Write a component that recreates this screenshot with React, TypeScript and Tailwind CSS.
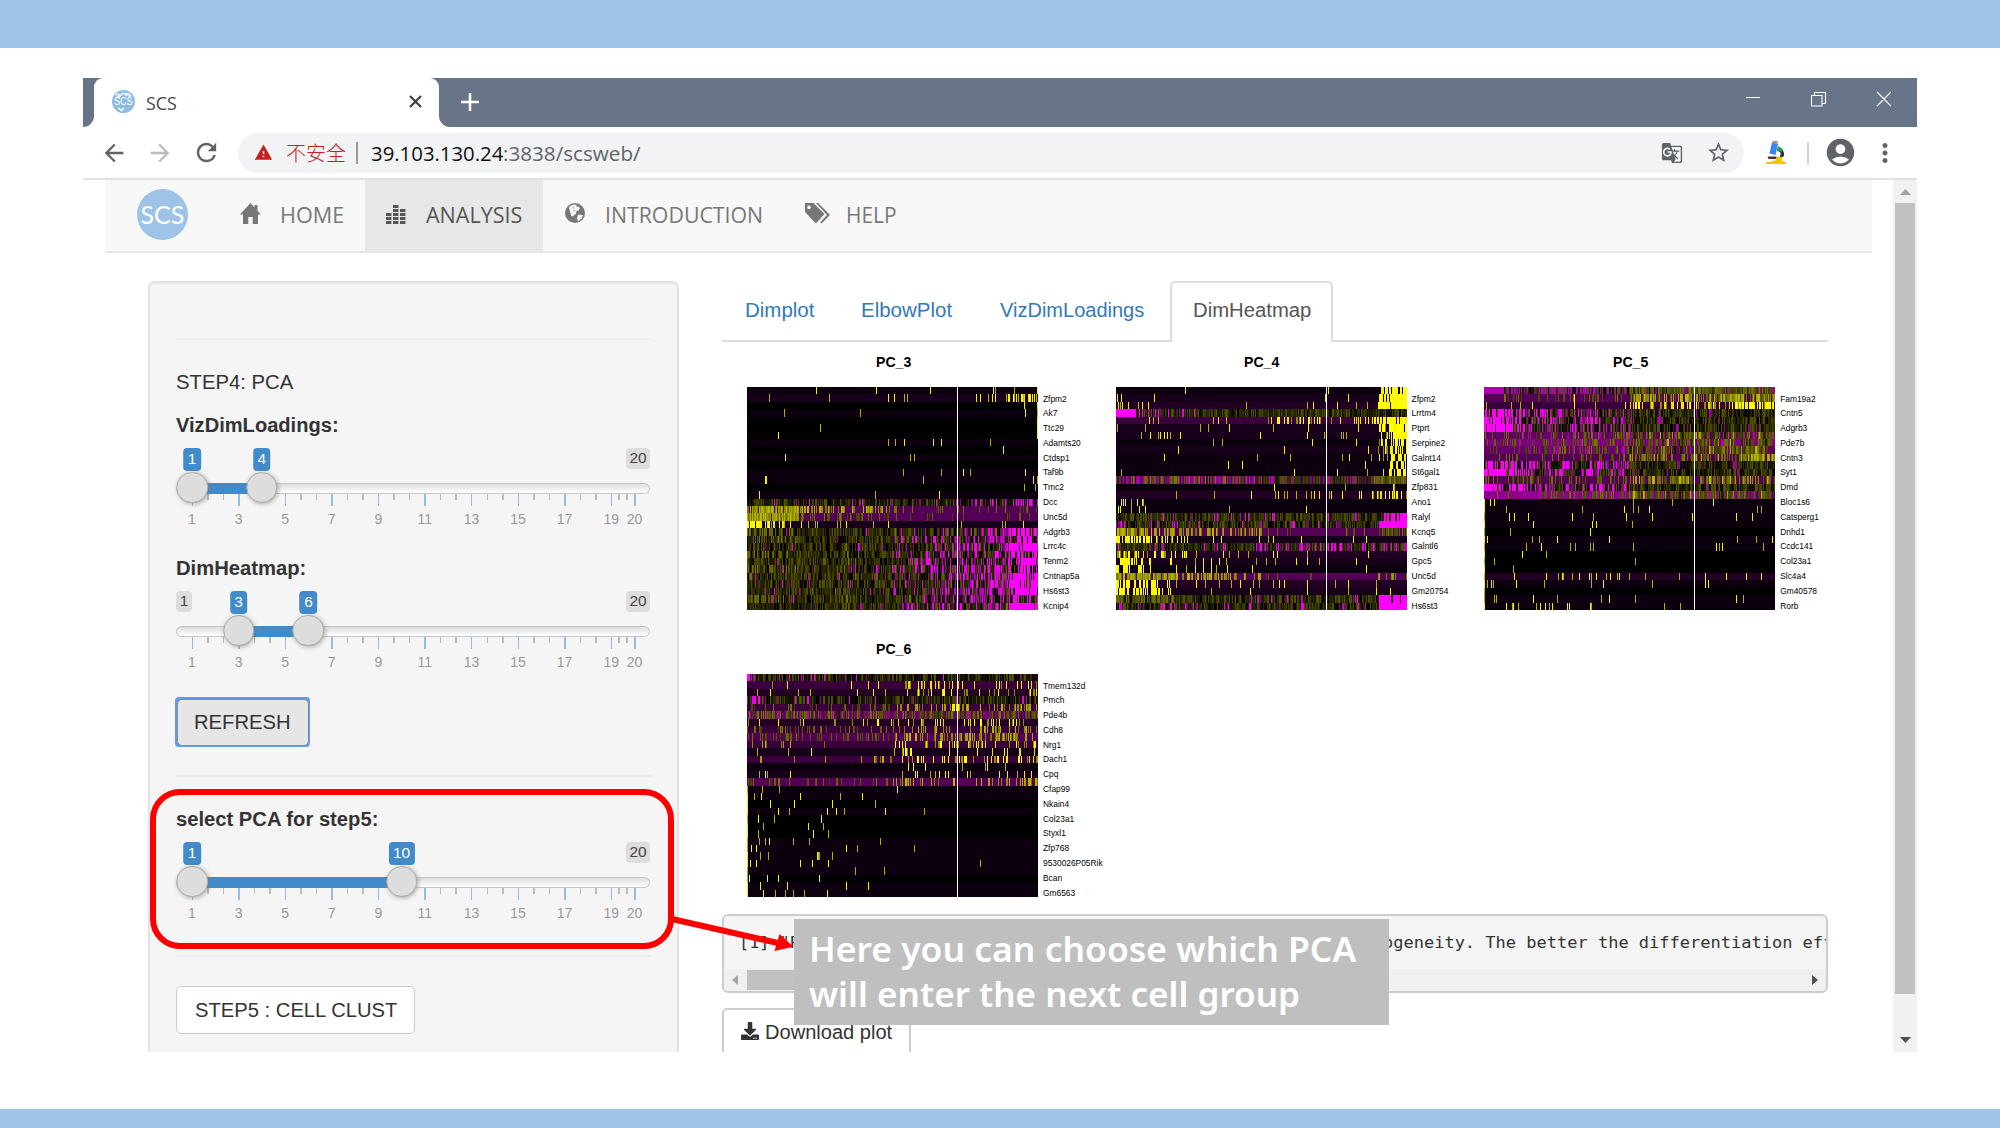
import { useLayoutEffect, useMemo, useRef, useState, type ReactNode } from "react";
import {
  MdArrowBack,
  MdArrowForward,
  MdRefresh,
  MdWarning,
  MdGTranslate,
  MdStarBorder,
  MdAccountCircle,
  MdMoreVert,
} from "react-icons/md";
import { FaDownload } from "react-icons/fa";

/** One line of text stretched horizontally to an exact width. */
function Fit({ w, className = "", children }: { w: number; className?: string; children: ReactNode }) {
  const ref = useRef<HTMLSpanElement>(null);
  const [k, setK] = useState(1);
  useLayoutEffect(() => {
    if (ref.current && ref.current.offsetWidth) setK(w / ref.current.offsetWidth);
  }, [w]);
  return (
    <span className={"block shrink-0 whitespace-pre " + className} style={{ width: w }}>
      <span ref={ref} className="inline-block origin-left" style={{ transform: k === 1 ? undefined : `scaleX(${k})` }}>
        {children}
      </span>
    </span>
  );
}

/* ---------- heat maps ---------- */

const PALETTES: Record<string, string[]> = {
  y: ["#ffff00", "#e6e600", "#8f8f00"],
  Y: ["#ffff00", "#ffff00", "#f4f400"],
  o: ["#2a2a00", "#383800", "#464600", "#1a1a00", "#525200"],
  O: ["#626200", "#545400", "#747400", "#444400"],
  g: ["#8c8c00", "#a4a400", "#747400", "#b8b800"],
  m: ["#ff00ff", "#f000f0", "#c000c0", "#7a0a7a"],
  M: ["#ff00ff"],
  q: ["#b400b4", "#a000a0", "#8a008a"],
  k: ["#000000", "#0e0e00", "#140014"],
};

type Zone = [number, number, number, number, string];
type Row = { b: string; t?: number[]; z?: Zone[] };

const K = "#000000";
const D = "#0c000e";
const N = "#16001a";
const P1 = "#220024";
const P2 = "#3a003c";
const P3 = "#540056";
const OL = "#262600";

const COLS = 291;

function buildCells(rows: Row[], seed: number) {
  let s = seed;
  const rnd = () => {
    s = (s * 1664525 + 1013904223) % 4294967296;
    return s / 4294967296;
  };
  const paths: Record<string, string> = {};
  const put = (color: string, x: number, y: number, w: number) => {
    paths[color] = (paths[color] ?? "") + `M${x} ${y}h${w}v1h${-w}z`;
  };
  rows.forEach((row, y) => {
    const cells: string[] = new Array(COLS).fill(row.b);
    (row.z ?? []).forEach(([x0, x1, p0, p1, pal]) => {
      const colors = PALETTES[pal];
      const a = Math.round(x0 * COLS);
      const b = Math.round(x1 * COLS);
      for (let i = a; i < b; i++) {
        const p = p0 + ((p1 - p0) * (i - a)) / (b - a);
        if (rnd() < p) {
          const c = colors[Math.floor(rnd() * colors.length)];
          cells[i] = c;
          if (rnd() < 0.15 && i + 1 < b) cells[i + 1] = c;
        }
      }
    });
    (row.t ?? []).forEach((t) => {
      const i = Math.min(COLS - 1, Math.round(t / 3));
      cells[i] = rnd() < 0.5 ? "#f4f400" : "#b4b400";
    });
    let start = 0;
    for (let i = 1; i <= COLS; i++) {
      if (i === COLS || cells[i] !== cells[start]) {
        put(cells[start], start, y, i - start);
        start = i;
      }
    }
  });
  return paths;
}

const pc3Dense = (a: number): Row => ({
  b: OL,
  z: [
    [0, 0.18, 0.7, 0.5, a ? "o" : "O"],
    [0.15, 1, 0.75, 0.6, "o"],
    [0, 1, 0.15, 0.35, "k"],
    [0.02, 0.5, 0.015, 0.03, "m"],
    [0.5, 0.72, 0.12, 0.3, "m"],
    [0.72, 0.9, 0.3, 0.5, "m"],
    [0.9, 1, a ? 0.75 : 0.5, a ? 0.85 : 0.6, "M"],
    [0, 0.9, 0.03, 0.05, "O"],
  ],
});

const PC3: Row[] = [
  { b: D, t: [208, 388, 550, 737, 745, 800, 872] },
  { b: N, t: [67, 247, 424, 442, 470, 480, 686, 698, 722, 735, 745, 778, 782, 786, 802, 806, 814, 822, 828, 850, 854, 860, 866], z: [[0.91, 0.98, 0.35, 0.4, "y"]] },
  { b: K, t: [832, 872] },
  { b: D, t: [112, 339, 835, 872] },
  { b: K, t: [872] },
  { b: K, t: [219, 872] },
  { b: K, t: [92, 872] },
  { b: D, t: [424, 445, 471, 557, 583, 729] },
  { b: K, t: [769] },
  { b: D, t: [115, 488, 500] },
  { b: K },
  { b: D, t: [468, 583, 649, 669, 835] },
  { b: D, t: [53, 56, 528, 857, 869] },
  { b: K, t: [830, 864] },
  { b: D, t: [35, 385, 575] },
  { b: "#141400", z: [[0, 1, 0.6, 0.5, "o"], [0, 1, 0.2, 0.3, "k"], [0, 0.7, 0.04, 0.06, "m"], [0.7, 0.92, 0.12, 0.25, "m"], [0.92, 1, 0.5, 0.7, "m"]] },
  { b: P3, z: [[0, 0.18, 0.95, 0.9, "g"], [0.18, 0.5, 0.6, 0.3, "g"], [0.5, 1, 0.1, 0.1, "O"]] },
  { b: P3, z: [[0, 0.18, 0.98, 0.9, "g"], [0.18, 0.5, 0.55, 0.25, "O"], [0.5, 1, 0.12, 0.12, "O"]] },
  { b: N, t: [105, 111, 130, 162, 184, 205, 210, 270, 280, 298, 379, 422, 643, 764, 775, 829], z: [[0, 0.05, 0.9, 0.9, "Y"], [0.05, 0.13, 0.5, 0.4, "y"]] },
  ...[0, 0, 1, 0, 1, 0, 1, 1, 1, 0, 1].map(pc3Dense),
];

const end = (p: number): Zone[] => [[0.9, 0.94, p * 0.5, p, "y"], [0.94, 1, p, p, "Y"]];

const PC4: Row[] = [
  { b: D, t: [206, 636], z: [[0.91, 1, 0.6, 0.6, "Y"]] },
  { b: N, t: [4, 16, 114, 626, 695], z: [[0.9, 1, 0.8, 0.98, "Y"]] },
  { b: P1, t: [6, 12, 18, 35, 66, 78, 96, 390, 573, 590, 663, 720, 752], z: [[0.9, 1, 0.97, 1, "Y"]] },
  { b: OL, z: [[0, 1, 0.5, 0.7, "o"], [0, 1, 0.3, 0.15, "k"], [0, 0.07, 0.95, 0.9, "M"], [0.07, 0.3, 0.2, 0.1, "m"]] },
  { b: P2, t: [100, 110, 127, 292, 307, 330], z: [[0.5, 0.9, 0.25, 0.3, "y"], [0.88, 1, 0.5, 0.9, "Y"]] },
  { b: N, t: [4, 88, 251, 276, 338, 471, 575, 727], z: end(0.7) },
  { b: N, t: [76, 103, 127, 132, 145, 154, 162, 193, 431, 573, 625, 676, 682, 690], z: end(0.75) },
  { b: D, t: [290, 319, 589, 720], z: end(0.45) },
  { b: N, t: [185, 505, 757], z: end(0.4) },
  { b: D, t: [145, 422, 523, 679, 700, 764], z: end(0.3) },
  { b: D, t: [336, 379, 748], z: end(0.3) },
  { b: D, t: [14, 533, 664, 752], z: end(0.4) },
  { b: P3, z: [[0, 0.5, 0.6, 0.6, "q"], [0, 0.5, 0.35, 0.3, "O"], [0.5, 1, 0.85, 0.7, "o"], [0.88, 1, 0.9, 0.9, "O"], [0.5, 0.9, 0.08, 0.08, "q"]] },
  { b: D, t: [473, 686, 830, 834] },
  { b: P1, t: [179, 293, 404, 478, 487, 505, 513, 540, 570, 585, 595, 608, 638, 644, 678, 730, 736], z: [[0.88, 1, 0.35, 0.4, "y"]] },
  { b: D, t: [14, 20, 26, 44, 62, 77, 82] },
  { b: D, t: [6, 12, 46, 70, 86, 340, 571] },
  { b: OL, z: [[0, 1, 0.8, 0.8, "o"], [0, 1, 0.15, 0.2, "k"], [0, 0.9, 0.08, 0.1, "m"], [0.92, 1, 0.8, 0.9, "M"]] },
  { b: OL, z: [[0, 1, 0.8, 0.8, "o"], [0, 1, 0.25, 0.25, "k"], [0, 0.9, 0.1, 0.06, "m"], [0.905, 1, 1, 1, "M"]] },
  { b: P3, z: [[0, 0.2, 0.85, 0.6, "g"], [0.2, 0.5, 0.4, 0.35, "g"], [0.5, 0.9, 0.04, 0.06, "O"], [0.9, 1, 0.4, 0.4, "O"]] },
  { b: N, t: [196, 204, 214, 290, 316, 430, 457, 470, 556, 710, 750], z: [[0, 0.13, 0.55, 0.6, "Y"], [0.13, 0.22, 0.3, 0.2, "y"]] },
  { b: OL, z: [[0, 1, 0.8, 0.7, "o"], [0, 1, 0.25, 0.25, "k"], [0, 0.5, 0.08, 0.08, "m"], [0.5, 1, 0.2, 0.35, "m"]] },
  { b: P1, t: [240, 320, 340, 366, 396, 470, 482, 573, 755], z: [[0, 0.25, 0.5, 0.25, "y"]] },
  { b: N, t: [236, 262, 285, 308, 330, 420, 450, 478, 540, 573, 610, 720], z: [[0, 0.2, 0.45, 0.15, "Y"]] },
  { b: D, t: [180, 210, 236, 262, 285, 300, 332, 408, 750], z: [[0, 0.2, 0.35, 0.1, "Y"]] },
  { b: P3, z: [[0, 0.35, 0.85, 0.5, "g"], [0.35, 0.5, 0.35, 0.2, "g"], [0.5, 0.9, 0.04, 0.04, "O"], [0.9, 1, 0.35, 0.3, "g"]] },
  { b: P1, t: [180, 240, 266, 310, 345, 372, 410, 430, 470, 490, 505, 573, 656, 696, 780], z: [[0, 0.2, 0.5, 0.2, "Y"]] },
  { b: N, t: [286, 402, 573, 695, 780, 823], z: [[0, 0.2, 0.6, 0.25, "Y"]] },
  { b: OL, z: [[0, 0.2, 0.8, 0.8, "O"], [0.2, 1, 0.8, 0.7, "o"], [0, 1, 0.1, 0.25, "k"], [0.2, 0.9, 0.06, 0.08, "m"], [0.905, 1, 0.7, 0.8, "M"]] },
  { b: OL, z: [[0, 1, 0.7, 0.6, "o"], [0, 1, 0.25, 0.35, "k"], [0, 0.9, 0.12, 0.08, "m"], [0.905, 1, 1, 1, "M"]] },
];

const pc5Mag: Row = {
  b: "#1a1a00",
  z: [[0, 1, 0.7, 0.8, "o"], [0, 1, 0.3, 0.25, "k"], [0, 0.14, 0.75, 0.5, "M"], [0.14, 0.5, 0.45, 0.3, "m"], [0.5, 1, 0.03, 0.03, "q"]],
};
const pc5Pur: Row = {
  b: "#640066",
  z: [[0, 0.5, 0.15, 0.4, "O"], [0.1, 0.5, 0.15, 0.15, "q"], [0.5, 1, 0.5, 0.6, "O"], [0.5, 1, 0.35, 0.35, "o"], [0.5, 1, 0.06, 0.1, "g"], [0.5, 1, 0.05, 0.05, "q"]],
};
const PC5: Row[] = [
  { b: "#b000b0", z: [[0.07, 0.5, 0.35, 0.6, "o"], [0.5, 1, 0.95, 0.95, "O"], [0.5, 1, 0.3, 0.2, "o"], [0.1, 0.6, 0.2, 0.1, "k"], [0.5, 1, 0.06, 0.04, "q"]] },
  { b: P3, t: [271], z: [[0, 0.5, 0.06, 0.2, "O"], [0.5, 1, 0.45, 0.75, "g"], [0.5, 1, 0.2, 0.2, "O"]] },
  { b: P2, t: [6, 82, 108, 143, 271, 334, 424], z: [[0.5, 1, 0.3, 0.4, "y"], [0.85, 1, 0.3, 0.6, "Y"]] },
  pc5Mag,
  pc5Mag,
  pc5Mag,
  pc5Pur,
  { ...pc5Pur, b: "#7c007c" },
  pc5Pur,
  { b: P3, z: [[0, 0.5, 0.1, 0.2, "O"], [0.5, 1, 0.3, 0.5, "g"], [0.5, 1, 0.3, 0.3, "O"], [0.92, 1, 0.9, 0.9, "g"]] },
  pc5Mag,
  pc5Mag,
  { b: P3, z: [[0, 0.5, 0.25, 0.3, "O"], [0.5, 1, 0.4, 0.45, "O"], [0.5, 1, 0.15, 0.25, "g"]] },
  pc5Mag,
  { ...pc5Pur, b: "#900090" },
  { b: D, t: [19, 30, 448, 565, 686] },
  { b: D, t: [65, 293, 420, 448, 463, 494, 818, 830] },
  { b: D, t: [75, 91, 133, 263, 328, 425, 505, 623, 755, 804] },
  { b: D, t: [148, 324, 336, 445] },
  { b: K, t: [79, 317] },
  { b: D, t: [8, 145, 165, 220, 374, 760, 815, 865] },
  { b: D, t: [127, 170, 258, 274, 319, 328, 448, 697, 706, 715, 838] },
  { b: K, t: [113, 185] },
  { b: K, t: [30, 454] },
  { b: K, t: [88] },
  { b: P1, t: [91, 187, 223, 235, 238, 263, 286, 316, 322, 337, 367, 379, 400, 406, 434, 484, 586, 664, 727, 787, 830] },
  { b: D, t: [8, 22, 28, 96, 179, 322, 357, 505, 664, 672] },
  { b: K },
  { b: D, t: [31, 37, 148, 220, 352, 374, 454, 757, 778] },
  { b: D, t: [67, 85, 88, 103, 157, 169, 184, 194, 205, 248, 256, 319, 322, 541, 589] },
].map((r: Row, i) => (i > 14 ? { ...r, t: [0, ...(r.t ?? [])] } : r));

const PC6: Row[] = [
  { b: "#141400", z: [[0, 1, 0.55, 0.65, "o"], [0, 1, 0.3, 0.3, "k"], [0, 0.4, 0.15, 0.08, "m"], [0.4, 1, 0.03, 0.03, "m"], [0, 0.012, 1, 1, "M"]] },
  { b: P2, z: [[0, 0.5, 0.06, 0.07, "y"], [0.5, 1, 0.18, 0.25, "y"]] },
  { b: P1, t: [30, 70, 152, 190, 330, 378, 415], z: [[0.5, 1, 0.12, 0.2, "y"]] },
  { b: "#141400", z: [[0, 1, 0.65, 0.65, "o"], [0, 1, 0.3, 0.3, "k"], [0, 0.45, 0.1, 0.06, "m"], [0.45, 1, 0.06, 0.05, "m"]] },
  { b: P2, z: [[0, 0.5, 0.2, 0.15, "O"], [0.5, 1, 0.28, 0.3, "g"], [0.7, 0.73, 0.5, 0.5, "Y"]] },
  { b: "#640066", z: [[0, 1, 0.45, 0.5, "O"], [0, 1, 0.2, 0.15, "o"], [0, 1, 0.15, 0.12, "q"]] },
  { b: P1, z: [[0, 0.5, 0.1, 0.08, "y"], [0.5, 1, 0.16, 0.22, "y"]] },
  { b: P2, z: [[0, 0.5, 0.25, 0.15, "O"], [0.5, 1, 0.25, 0.35, "g"]] },
  { b: P3, z: [[0, 0.5, 0.2, 0.2, "O"], [0.5, 1, 0.25, 0.3, "g"]] },
  { b: P2, z: [[0, 0.5, 0.12, 0.08, "g"], [0.5, 1, 0.22, 0.25, "y"]] },
  { b: N, t: [29, 124, 193, 440], z: [[0.53, 0.57, 0.5, 0.5, "y"], [0.6, 1, 0.08, 0.16, "y"]] },
  { b: P2, z: [[0, 0.5, 0.12, 0.1, "g"], [0.5, 1, 0.14, 0.24, "y"]] },
  { b: D, t: [482, 499, 534, 646, 715, 721, 774] },
  { b: N, t: [37, 55, 61, 130, 464, 505, 511, 549, 565, 575, 595, 604, 661, 668, 756, 780, 811, 830, 852] },
  { b: P3, z: [[0, 0.5, 0.2, 0.1, "O"], [0.5, 0.62, 0.5, 0.4, "g"], [0.62, 1, 0.2, 0.25, "g"]] },
  { b: D, t: [46, 96, 451] },
  { b: D, t: [22, 43, 158, 279, 345] },
  { b: K, t: [70, 142, 256, 385] },
  { b: D, t: [93, 127, 239, 267, 291, 413, 531] },
  { b: K, t: [33, 82, 222] },
  { b: K, t: [49, 184, 228] },
  { b: K, t: [33, 198, 244] },
  { b: D, t: [36, 55, 67, 139, 187, 399] },
  { b: D, t: [13, 28, 298, 331, 502] },
  { b: D, t: [40, 64, 210, 213, 216, 254] },
  { b: D, t: [10, 27, 158, 196, 244, 700] },
  { b: D, t: [324, 411] },
  { b: K, t: [7, 61, 93, 216] },
  { b: D, t: [39, 121, 296, 362] },
  { b: D, t: [49, 84, 115, 139, 170, 241] },
].map((r: Row, i) => (i > 14 ? { ...r, t: [0, ...(r.t ?? [])] } : r));

function Heatmap({ title, rows, genes, seed }: { title: string; rows: Row[]; genes: string[]; seed: number }) {
  const paths = useMemo(() => buildCells(rows, seed), [rows, seed]);
  return (
    <div className="flex w-[368.6px] shrink-0 flex-col pl-[25px]">
      <div className="flex w-[292px] justify-center">
        <Fit w={35} className="text-[14.5px] leading-[20px] font-bold text-black">
          {title}
        </Fit>
      </div>
      <div className="mt-[15px] flex">
        <svg className="shrink-0" width="291" height="223" viewBox="0 0 291 30" preserveAspectRatio="none" shapeRendering="crispEdges">
          {Object.entries(paths).map(([c, d]) => (
            <path key={c} d={d} fill={c} />
          ))}
          <rect x="210" y="0" width="1" height="30" fill="#fff" />
        </svg>
        <div className="flex flex-col pt-[4.5px] pl-[5px]">
          {genes.map((g) => (
            <span key={g} className="h-[14.8px] text-[8.4px] leading-[14.8px] whitespace-nowrap text-black">
              {g}
            </span>
          ))}
        </div>
      </div>
    </div>
  );
}

/* ---------- sliders ---------- */

const at = (v: number) => 16 + 23.29 * (v - 1);
const MAJORS = [1, 3, 5, 7, 9, 11, 13, 15, 17, 19, 20];

function RangeSlider({ label, w, from, to }: { label: string; w: number; from: number; to: number }) {
  return (
    <div className="flex h-[143px] flex-col">
      <Fit w={w} className="text-[19.6px] leading-[27px] h-[28px] font-bold">
        {label}
      </Fit>
      <div className="relative h-[115px] w-[474px]">
        {from > 1 && (
          <span className="absolute top-[7.5px] left-0 h-[21px] w-[16px] rounded-[4px] bg-[#dddddd] text-center text-[15.4px] leading-[20px] text-[#444]">1</span>
        )}
        <span className="absolute top-[7.5px] right-0 h-[21px] w-[24px] rounded-[4px] bg-[#dddddd] text-center text-[15.4px] leading-[20px] text-[#444]">20</span>
        {[from, to].map((v) => (
          <span
            key={v}
            className="absolute top-[7.5px] h-[23px] -translate-x-1/2 rounded-[4px] bg-[#428bca] px-[4.5px] text-[15.4px] leading-[21px] text-white"
            style={{ left: at(v) }}
          >
            {v}
          </span>
        ))}
        <div className="absolute top-[43px] left-0 h-[11px] w-[474px] rounded-full border-[1.5px] border-[#c6c6c6] bg-linear-to-b from-[#dedede] to-white" />
        <div className="absolute top-[43px] h-[11px] bg-[#428bca]" style={{ left: at(from), width: at(to) - at(from) }} />
        {MAJORS.map((v, i) => (
          <div key={v}>
            <span className="absolute top-[54px] h-[12px] w-[1.5px] bg-[#94bde0]" style={{ left: at(v) - 0.5 }} />
            <span className="absolute top-[70px] -translate-x-1/2 text-[14px] leading-[18px] text-[#999]" style={{ left: at(v) }}>
              {v}
            </span>
            {i < 10 &&
              [1, 2].map((n) => (
                <span
                  key={n}
                  className="absolute top-[54px] h-[6px] w-[1.5px] bg-[#bbb]"
                  style={{ left: at(v + ((MAJORS[i + 1] - v) * n) / 3) - 0.5 }}
                />
              ))}
          </div>
        ))}
        {[from, to].map((v) => (
          <span
            key={v}
            className="absolute top-[31.5px] size-[31.5px] -translate-x-1/2 rounded-full border-[1.5px] border-[#ababab] bg-[#dddddd] shadow-[1px_1px_4px_rgba(120,120,120,0.6)]"
            style={{ left: at(v) }}
          />
        ))}
      </div>
    </div>
  );
}

/* ---------- icons ---------- */

const HomeIcon = () => (
  <svg width="21" height="21" viewBox="0 0 21 21" fill="#777">
    <path d="M10.5 0 14.500 4.400V2H17.500V7.700L21 11.500H18V21H12.700V14H8.300V21H3V11.500H0z" />
  </svg>
);
const BarsIcon = () => (
  <svg width="20" height="19" viewBox="0 0 20 19" fill="#555">
    {[3, 5, 4].map((n, c) =>
      Array.from({ length: n }, (_, i) => <rect key={`${c}-${i}`} x={c * 7} y={16 - i * 4} width="5.400" height="3" />),
    )}
  </svg>
);
const GlobeIcon = () => (
  <svg width="20" height="20" viewBox="0 0 20 20">
    <circle cx="10" cy="10" r="10" fill="#777" />
    <path d="M4 4.500Q6 1.500 10 1.500l2 1-1 1.500 2.500-.5 1.500 1.500-1.500 2.500-2 .5-.5 3-2 1-1 1.500-2-1L5 8.500z" fill="#f8f8f8" />
    <path d="M13 11.500l5 .5-1.500 3.500L13 18.500l-1-3z" fill="#f8f8f8" />
    <path d="M7 4.500l2-.5-.5 2zM8 7.500l2.500-.5-.5 1.500z" fill="#999" />
  </svg>
);
const TagsIcon = () => (
  <svg width="25" height="21" viewBox="0 0 25 21" fill="#777">
    <path fillRule="evenodd" d="M0 0h8.500L19.500 11 11 20.500 0 9zM4 2.500a1.800 1.800 0 1 0 .01 0z" />
    <path d="M11 0h2.200L25 12l-8.500 8.500-1.300-1.300L22 12z" />
  </svg>
);
const Microscope = () => (
  <svg width="20" height="23" viewBox="0 0 20 23">
    <path d="M12 7q7 1 6 8l-4 3h-3q5-2 3-7l-3-1z" fill="#2f3a3f" />
    <path d="M12 5l5 3-2 3-4-2z" fill="#2e9b4f" />
    <path d="M6 1.500 12 3 9.500 14 3.500 12.500z" fill="#3b82f6" />
    <path d="M6.500 0h5l.5 3-6-1.500z" fill="#b08b7a" />
    <path d="M1.500 15.500h9v2.500h-8z" fill="#5b2d3a" />
    <path d="M0 21h4l6-2 1-3h5v4l4 1v2H0z" fill="#f2c400" />
  </svg>
);

function Logo() {
  return (
    <div className="flex size-[51px] items-center justify-center rounded-full bg-[#9dc3e6]">
      <Fit w={44} className="font-['Lato'] text-[25px] leading-[49px] text-white">
        SCS
      </Fit>
    </div>
  );
}

function Favicon() {
  return (
    <div className="relative flex size-[23px] items-center justify-center overflow-hidden rounded-full bg-[#8dbbe4]">
      <svg className="absolute inset-0" width="23" height="23" viewBox="0 0 23 23" fill="none" stroke="#fff" strokeWidth="1.300">
        <path d="M3 5l3-1 2 2 3-3 3 2 4-1M5 7l3 1M14 3l3 3M6 18l3 2 3-2M9 21l2-2M4 8l3-2M17 7l2-2" />
      </svg>
      <Fit w={19} className="relative text-[10px] leading-[24px] text-white">
        SCS
      </Fit>
    </div>
  );
}

const NAV_TEXT = "font-['Open_Sans'] text-[21.3px] leading-[30px]";

function Tab({ w, children }: { w: number; children: string }) {
  return (
    <Fit w={w} className="text-[19.6px] leading-[27px] text-[#337ab7]">
      {children}
    </Fit>
  );
}

/* ---------- page ---------- */

function BrowserChrome() {
  return (
    <>
      <div className="flex h-[49px] shrink-0 bg-[#687589]">
        <div className="w-[11px] bg-white">
          <div className="h-full rounded-br-[11px] bg-[#687589]" />
        </div>
        <div className="flex w-[345px] rounded-t-[9px] bg-white pt-[12px] pl-[18px]">
          <Favicon />
          <Fit w={31} className="ml-[11px] font-['Open_Sans'] text-[19px] leading-[26px] text-[#45494d]">
            SCS
          </Fit>
          <svg className="mt-[5px] ml-[232px]" width="13" height="13" viewBox="0 0 13 13" stroke="#3c4043" strokeWidth="2.200">
            <path d="M1 1l11 11M12 1L1 12" />
          </svg>
        </div>
        <div className="flex-1 bg-white">
          <div className="flex h-full rounded-bl-[11px] bg-[#687589]">
            <svg className="mt-[15px] ml-[22px]" width="18" height="18" viewBox="0 0 18 18" stroke="#fff" strokeWidth="2.500">
              <path d="M0 9h18M9 0v18" />
            </svg>
            <svg className="mt-[13px] mr-[26px] ml-auto" width="145" height="16" viewBox="0 0 145 16" fill="none" stroke="#fff" strokeWidth="1.100">
              <path d="M0 6.500h14M65.500 4.500h10.500v10.500h-10.500zM68.500 4.500v-3h11v11h-3.500M131 1l14 14M145 1l-14 14" />
            </svg>
          </div>
        </div>
      </div>
      <div className="flex h-[53px] shrink-0 items-center border-b-2 border-[#dfe1e5] bg-white text-[#5f6368]">
        <MdArrowBack className="ml-[17px] size-[28px]" />
        <MdArrowForward className="ml-[18px] size-[28px] text-[#babcbe]" />
        <MdRefresh className="ml-[18px] size-[29px]" />
        <div className="ml-[17px] flex h-[40px] w-[1506px] items-center rounded-full bg-[#f1f3f4]">
          <MdWarning className="ml-[16px] size-[19px] text-[#c5221f]" />
          <Fit w={60} className="ml-[13px] font-['Noto_Sans_CJK_SC'] text-[20px] leading-[29px] font-light text-[#c5221f]">
            不安全
          </Fit>
          <div className="ml-[10px] h-[22px] w-[2px] bg-[#9a9da0]" />
          <Fit w={132} className="ml-[13px] font-['Open_Sans'] text-[20.500px] leading-[30px] text-[#111]">
            39.103.130.24
          </Fit>
          <Fit w={138} className="font-['Open_Sans'] text-[20.500px] leading-[30px] text-[#5f6368]">
            :3838/scsweb/
          </Fit>
          <MdGTranslate className="ml-auto size-[22px]" />
          <MdStarBorder className="mr-[13px] ml-[23px] size-[25px]" />
        </div>
        <div className="ml-[22px]">
          <Microscope />
        </div>
        <div className="ml-[21px] h-[22px] w-[1.500px] bg-[#cfd1d4]" />
        <MdAccountCircle className="ml-[15px] size-[33px]" />
        <MdMoreVert className="ml-[13px] size-[30px]" />
      </div>
    </>
  );
}

function Navbar() {
  return (
    <div className="flex h-[73px] w-[1767px] shrink-0 border-b-2 border-[#e7e7e7] bg-[#f8f8f8] text-[#777]">
      <div className="ml-[32px] pt-[9px]">
        <Logo />
      </div>
      <div className="ml-[52px] flex pt-[20px]">
        <div className="pt-[3px]"><HomeIcon /></div>
        <Fit w={64} className={"ml-[19px] " + NAV_TEXT}>HOME</Fit>
      </div>
      <div className="ml-[21px] flex w-[178px] bg-[#e7e7e7] pt-[20px] pl-[21px] text-[#555]">
        <div className="pt-[5px]"><BarsIcon /></div>
        <Fit w={96} className={"ml-[20px] " + NAV_TEXT}>ANALYSIS</Fit>
      </div>
      <div className="ml-[22px] flex pt-[20px]">
        <div className="pt-[3px]"><GlobeIcon /></div>
        <Fit w={158} className={"ml-[20px] " + NAV_TEXT}>INTRODUCTION</Fit>
      </div>
      <div className="ml-[42px] flex pt-[20px]">
        <div className="pt-[3px]"><TagsIcon /></div>
        <Fit w={50} className={"ml-[16px] " + NAV_TEXT}>HELP</Fit>
      </div>
    </div>
  );
}

function Sidebar() {
  return (
    <div className="ml-[43px] flex h-[900px] w-[531px] shrink-0 flex-col rounded-[6px] border-2 border-[#e3e3e3] bg-[#f5f5f5] pr-[26px] pl-[26px] shadow-[inset_0_1px_2px_rgba(0,0,0,0.06)]">
      <div className="mt-[55px] h-[2px] shrink-0 bg-[#efefef]" />
      <Fit w={117} className="mt-[28px] text-[19.6px] leading-[28px]">STEP4: PCA</Fit>
      <div className="mt-[16px]">
        <RangeSlider label="VizDimLoadings:" w={163} from={1} to={4} />
      </div>
      <RangeSlider label="DimHeatmap:" w={130} from={3} to={6} />
      <div className="-mt-px -ml-px flex h-[50px] w-[135px] shrink-0 rounded-[4px] bg-[#5e9bf0] p-[1.500px]">
        <div className="flex flex-1 items-center justify-center rounded-[5px] border-[1.500px] border-[#8c8c8c] bg-[#e6e6e6]">
          <Fit w={97} className="text-[19.6px] leading-[28px]">REFRESH</Fit>
        </div>
      </div>
      <div className="mt-[28px] h-[2px] shrink-0 bg-[#ececec]" />
      <div className="mt-[29px]">
        <RangeSlider label="select PCA for step5:" w={202} from={1} to={10} />
      </div>
      <div className="mt-[6px] h-[2px] shrink-0 bg-[#ececec]" />
      <div className="mt-[29px] flex h-[48px] w-[239px] shrink-0 items-center justify-center rounded-[5px] border-[1.500px] border-[#ccc] bg-white">
        <Fit w={202} className="text-[19.6px] leading-[28px]">STEP5 : CELL CLUST</Fit>
      </div>
    </div>
  );
}

const OUTPUT_TEXT = "font-['DejaVu_Sans_Mono'] text-[16.300px] leading-[31px] text-[#333]";

function MainPanel() {
  return (
    <div className="ml-[43px] flex w-[1106px] shrink-0 flex-col">
      <div className="flex h-[61px] shrink-0 items-start border-b-2 border-[#ddd]">
        <div className="flex pt-[16px] pl-[23px]">
          <Tab w={69}>Dimplot</Tab>
          <div className="w-[47px]" />
          <Tab w={91}>ElbowPlot</Tab>
          <div className="w-[48px]" />
          <Tab w={144}>VizDimLoadings</Tab>
        </div>
        <div className="ml-[26px] flex h-[61px] w-[163px] justify-center rounded-t-[5px] border-2 border-b-0 border-[#ddd] bg-white pt-[14px]">
          <Fit w={118} className="text-[19.6px] leading-[27px] text-[#555]">DimHeatmap</Fit>
        </div>
      </div>
      <div className="flex h-[287px] shrink-0 pt-[10px]">
        <Heatmap title="PC_3" rows={PC3} seed={11} genes={["Zfpm2", "Ak7", "Ttc29", "Adamts20", "Ctdsp1", "Taf9b", "Tmc2", "Dcc", "Unc5d", "Adgrb3", "Lrrc4c", "Tenm2", "Cntnap5a", "Hs6st3", "Kcnip4"]} />
        <Heatmap title="PC_4" rows={PC4} seed={23} genes={["Zfpm2", "Lrrtm4", "Ptprt", "Serpine2", "Galnt14", "St6gal1", "Zfp831", "Ano1", "Ralyl", "Kcnq5", "Galntl6", "Gpc5", "Unc5d", "Gm20754", "Hs6st3"]} />
        <Heatmap title="PC_5" rows={PC5} seed={37} genes={["Fam19a2", "Cntn5", "Adgrb3", "Pde7b", "Cntn3", "Syt1", "Dmd", "Bloc1s6", "Catsperg1", "Dnhd1", "Ccdc141", "Col23a1", "Slc4a4", "Gm40578", "Rorb"]} />
      </div>
      <div className="flex h-[285px] shrink-0 pt-[10px]">
        <Heatmap title="PC_6" rows={PC6} seed={51} genes={["Tmem132d", "Pmch", "Pde4b", "Cdh8", "Nrg1", "Dach1", "Cpq", "Cfap99", "Nkain4", "Col23a1", "Styxl1", "Zfp768", "9530026P05Rik", "Bcan", "Gm6563"]} />
      </div>
      <div className="flex h-[79px] shrink-0 flex-col overflow-hidden rounded-[6px] border-2 border-[#ccc] bg-[#f5f5f5]">
        <div className="flex h-[53px] shrink-0 pt-[11px] pl-[15px]">
          <Fit w={61} className={OUTPUT_TEXT}>{'[1] "P'}</Fit>
          <div className="w-[583px] shrink-0" />
          <Fit w={450} className={OUTPUT_TEXT}>ogeneity. The better the differentiation eff</Fit>
        </div>
        <div className="flex h-[22px] items-center bg-[#f0f0f0]">
          <svg className="ml-[8px]" width="6" height="10" viewBox="0 0 6 10" fill="#a3a3a3"><path d="M6 0v10L0 5z" /></svg>
          <div className="ml-[9px] h-[20px] w-[600px] bg-[#c1c1c1]" />
          <svg className="mr-[8px] ml-auto" width="6" height="10" viewBox="0 0 6 10" fill="#505050"><path d="M0 0v10l6-5z" /></svg>
        </div>
      </div>
      <div className="mt-[15px] flex h-[60px] w-[189px] shrink-0 rounded-[5px] border-2 border-[#ccc] bg-white pt-[9px] pl-[17px]">
        <FaDownload className="mt-[3px] size-[18px]" />
        <Fit w={127} className="ml-[6px] text-[19.6px] leading-[27px]">Download plot</Fit>
      </div>
    </div>
  );
}

export default function App() {
  return (
    <div className="relative flex h-[1128px] w-[2000px] flex-col overflow-hidden bg-white font-['Liberation_Sans',sans-serif] text-[#333]">
      <div className="h-[48px] shrink-0 bg-[#9dc3e6]" />
      <div className="mt-[30px] ml-[83px] flex h-[974px] w-[1834px] shrink-0 flex-col overflow-hidden">
        <BrowserChrome />
        <div className="flex min-h-0 flex-1">
          <div className="flex w-[1810px] flex-col overflow-hidden pl-[22px]">
            <Navbar />
            <div className="mt-[28px] flex">
              <Sidebar />
              <MainPanel />
            </div>
          </div>
          <div className="flex w-[24px] flex-col items-center bg-[#f1f1f1]">
            <svg className="mt-[9px] shrink-0" width="11" height="6" viewBox="0 0 11 6" fill="#a3a3a3"><path d="M0 6h11L5.500 0z" /></svg>
            <div className="mt-[8px] h-[791px] w-[20px] shrink-0 bg-[#c1c1c1]" />
            <svg className="mt-auto mb-[9px] shrink-0" width="11" height="6" viewBox="0 0 11 6" fill="#505050"><path d="M0 0h11L5.500 6z" /></svg>
          </div>
        </div>
      </div>
      <div className="mt-auto h-[19px] shrink-0 bg-[#9dc3e6]" />

      <div className="absolute top-[789px] left-[150px] h-[160px] w-[524px] rounded-[30px] border-[6px] border-[#ff0000]" />
      <div className="absolute top-[919px] left-[794px] h-[106px] w-[595px] bg-[#bfbfbf] pt-[7px] pl-[15px] font-['Noto_Sans'] text-[35px] leading-[45px] font-semibold text-white">
        <Fit w={547}>Here you can choose which PCA</Fit>
        <Fit w={491}>will enter the next cell group</Fit>
      </div>
      <svg className="absolute top-[910px] left-[670px]" width="130" height="50" viewBox="670 910 130 50">
        <path d="M672 919L780 943.500" stroke="#f00" strokeWidth="6" />
        <path d="M779.500 934L793.500 946.700L774.500 951z" fill="#f00" />
      </svg>
    </div>
  );
}
